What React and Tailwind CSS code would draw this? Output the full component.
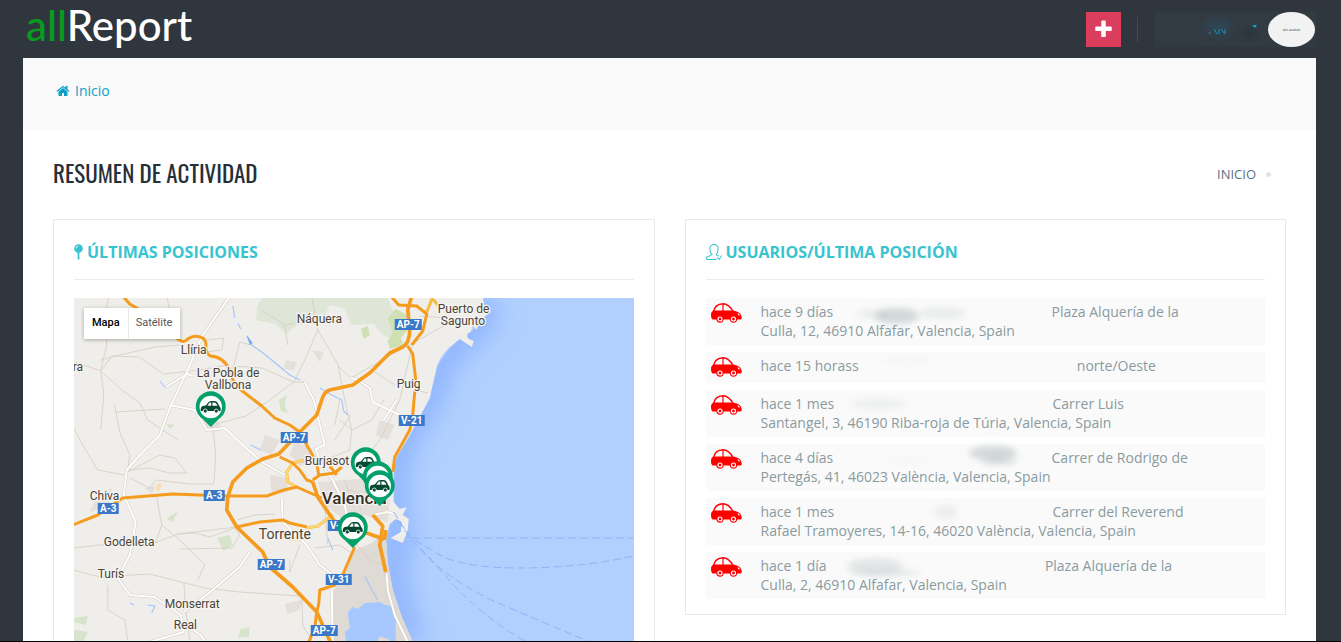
import React, { useState } from 'react'
import { SlUserFollowing } from 'react-icons/sl'

const positions = [
  {
    id: 1,
    when: 'hace 9 días',
    address: 'Plaza Alquería de la Culla, 12, 46910 Alfafar, Valencia, Spain',
    gap: 'w-[211px]',
    smudges: [[60, 18, 22, 8, 0.35], [35, 16, 16, 5, 0.12], [105, 15, 24, 6, 0.14]]
  },
  {
    id: 2,
    when: 'hace 15 horass',
    address: 'norte/Oeste',
    gap: 'w-[211px]',
    smudges: [[45, 8, 30, 4, 0.03]]
  },
  {
    id: 3,
    when: 'hace 1 mes',
    address: 'Carrer Luis Santangel, 3, 46190 Riba-roja de Túria, Valencia, Spain',
    gap: 'w-[211px]',
    smudges: [[40, 14, 28, 6, 0.1]]
  },
  {
    id: 4,
    when: 'hace 4 días',
    address: 'Carrer de Rodrigo de Pertegás, 41, 46023 València, Valencia, Spain',
    gap: 'w-[211px]',
    smudges: [[156, 9, 24, 7, 0.35], [162, 17, 18, 3, 0.35], [70, 17, 20, 2, 0.08]]
  },
  {
    id: 5,
    when: 'hace 1 mes',
    address: 'Carrer del Reverend Rafael Tramoyeres, 14-16, 46020 València, Valencia, Spain',
    gap: 'w-[211px]',
    smudges: [[108, 14, 12, 7, 0.12]]
  },
  {
    id: 6,
    when: 'hace 1 día',
    address: 'Plaza Alquería de la Culla, 2, 46910 Alfafar, Valencia, Spain',
    gap: 'w-[211px]',
    smudges: [[45, 14, 28, 8, 0.2], [55, 21, 36, 3, 0.22]]
  }
]

const pins = [
  [366, 463],
  [378, 477],
  [380, 486],
  [353, 528],
  [211, 407]
]

const towns = [
  { name: 'Náquera', x: 297, y: 323, size: 12 },
  { name: 'Puerto de', x: 438, y: 313, size: 12 },
  { name: 'Sagunto', x: 441, y: 325, size: 12 },
  { name: 'Llíria', x: 181, y: 354, size: 12 },
  { name: 'ra', x: 73, y: 371, size: 12 },
  { name: 'La Pobla de', x: 197, y: 377, size: 12 },
  { name: 'Vallbona', x: 205, y: 389, size: 12 },
  { name: 'Puig', x: 397, y: 388, size: 12 },
  { name: 'Burjasot', x: 305, y: 465, size: 12 },
  { name: 'Chiva', x: 90, y: 500, size: 12 },
  { name: 'Godelleta', x: 104, y: 546, size: 12 },
  { name: 'Turís', x: 98, y: 578, size: 12 },
  { name: 'Torrente', x: 259, y: 539, size: 14 },
  { name: 'Monserrat', x: 165, y: 608, size: 12 },
  { name: 'Real', x: 174, y: 629, size: 12 }
]

const shields = [
  { name: 'AP-7', x: 395, y: 319, w: 27 },
  { name: 'V-21', x: 399, y: 415, w: 26 },
  { name: 'AP-7', x: 281, y: 432, w: 27 },
  { name: 'A-3', x: 204, y: 490, w: 21 },
  { name: 'A-3', x: 98, y: 503, w: 21 },
  { name: 'V-30', x: 328, y: 520, w: 26 },
  { name: 'AP-7', x: 258, y: 559, w: 27 },
  { name: 'V-31', x: 326, y: 574, w: 26 },
  { name: 'AP-7', x: 311, y: 625, w: 27 }
]

const highways = [
  'M123 296 L130 304 L137 308 L160 322 L178 339 Q184 344 188 339 Q195 334 203 338 Q207 341 206 347 Q206 354 211 356 Q224 357 230 370 L234 382 L240 389 L262 406 L275 418 L290 425 L300 432',
  'M392 297 L399 305 L417 306 L427 314 L423 331 L412 345',
  'M408 346 L413 354 L416 380 L413 415 L410 430 L395 457 L393 472',
  'M303 438 L311 452 L317 463 L319 475',
  'M280 457 L293 463 L300 470 L307 480 L313 482',
  'M313 480 L320 475 L335 473 L342 467 M330 466 L337 475',
  'M73 525 L98 515 L108 508 L123 498 L173 494 L227 496 L267 496 L284 490 L297 487 L322 498',
  'M237 527 L260 522 L283 520 L290 523 L307 527',
  'M355 547 L342 577 L335 585 L320 590 L319 604 L317 612',
  'M317 612 L315 628 L309 642'
]

const thickHighways = [
  'M412 296 L408 310 L410 330 Q410 343 403 347 L390 353 L370 373 L353 385 L330 390 Q324 392 322 400 L317 415 L300 432 L279 454 L263 459 L247 468 L233 482 L228 497 L227 510 L237 527 L263 552 L270 567 L293 587 L317 612 L331 643',
  'M313 482 L318 497 L335 522 L367 533 L381 538',
  'M373 515 L383 526 L380 545 L386 572'
]

const whiteRoads = [
  'M230 297 L222 308 L203 335 L187 372 L170 408 L160 435 L140 455 L127 470 L124 495 L136 522 L130 555 L118 578 L130 595 L155 597 L181 615 L184 632 L150 642',
  'M193 376 L187 374 L165 388 M170 405 L195 410 L207 430 L225 428 L244 446 L262 462 L285 475',
  'M305 382 L314 400 L325 445 L316 449 L322 465 L333 480 L345 505 L350 530',
  'M351 378 L358 380 L370 388 L373 402 L400 415 M397 400 L384 420',
  'M184 612 L208 594 L240 567 L250 552 M184 625 L200 634 L206 642',
  'M282 498 L283 522 L307 545 L320 565 L333 575 M332 590 L333 642',
  'M387 574 L388 590 L395 615 L408 642',
  'M373 515 L388 512 L394 514'
]

const lanes = [
  'M109 297 L104 318 L107 345 L101 370 M101 360 L120 355 L155 347 L180 345',
  'M167 297 L171 315 M74 362 L90 367 L101 371 L122 390 L140 403 L148 420 L178 440',
  'M101 371 L104 395 L101 430 M101 371 L112 356 L139 357 L164 374 L200 370 L228 365',
  'M165 311 L158 320 M208 340 L224 338 L222 350 L206 352',
  'M230 384 L233 370 L240 342 L251 345 M232 366 L262 368 L294 382 L305 382',
  'M312 297 L318 330 L338 364 L345 400 L352 430 L350 450 L318 463',
  'M318 330 L305 360 L294 382 L270 400 L246 416 L216 424',
  'M338 366 L351 378 L400 350 M351 415 L335 440',
  'M60 400 L80 440 L98 470 L125 475 M115 405 L120 432 L130 455 L128 470 M115 412 L165 409',
  'M127 470 L150 468 L170 473 L187 473 L175 458 L160 455 L128 472',
  'M130 478 L150 488 L156 480 L190 484 L214 484 L216 455 L213 425',
  'M157 497 L162 525 L156 542 L134 542 M162 525 L180 540 L205 565 L198 580',
  'M74 548 L100 545 L155 543 L178 534 L237 527 M74 570 L100 577 L150 574 L205 588 L240 592 L300 596',
  'M178 534 L195 533 L210 537 L235 528 L240 535 L232 548 L180 549 M190 640 L186 610 L184 582',
  'M237 520 L255 515 L275 514 M290 560 L290 572 L300 545 M108 585 L108 610 L125 620 L128 640',
  'M302 596 L303 625 L312 640 M412 347 L400 400 L380 440 L368 455',
  'M340 420 L352 430 L372 420 L384 400 M372 370 L395 385 M400 350 L428 335 L445 325',
  'M414 390 L428 393 M353 540 L370 560 L384 566 M340 505 L362 502 M330 498 L350 490 L372 500',
  'M345 480 L350 495 L362 510 M325 505 L328 545 M315 548 L340 545 L350 552 M340 400 L335 425',
  'M420 316 L450 318 M262 310 L285 325 L300 322 M285 325 L288 345'
]

const urban = [
  'M295 440 L312 450 L315 460 L300 466 L290 455 Z',
  'M270 475 L287 478 L288 492 L272 494 Z',
  'M265 435 L280 440 L272 455 L260 450 Z',
  'M318 482 L372 478 L390 500 L388 522 L365 515 L345 520 L325 505 Z',
  'M380 420 L395 425 L388 440 L376 435 Z',
  'M98 495 L112 488 L110 505 L90 512 Z',
  'M145 488 L156 486 L152 494 Z',
  'M286 360 L297 362 L294 370 L284 369 Z',
  'M312 350 L324 352 L320 362 Z',
  'M200 420 L218 420 L222 430 L206 432 Z',
  'M285 604 L302 600 L300 610 L288 614 Z'
]

function Smudge({ spots }) {
  return (
    <svg className="absolute left-0 top-0 h-full w-full overflow-visible" aria-hidden="true">
      {spots.map(([cx, cy, rx, ry, opacity], i) => (
        <ellipse key={i} cx={cx} cy={cy - 5} rx={rx} ry={ry} fill="#8c9a9f" opacity={opacity} className="blur-[3px]" />
      ))}
    </svg>
  )
}

function RedCar() {
  return (
    <svg viewBox="0 0 31 20" className="mt-px h-5 w-[31px] shrink-0" aria-hidden="true">
      <path d="M2.500 9 Q4 1 12 0.800 Q18 1 22 8.500" fill="none" stroke="#f00" strokeWidth="1.400" />
      <path d="M12 1 V9" stroke="#f00" strokeWidth="1.200" />
      <path d="M2 7.500 H22 Q29 8.500 30 12 Q31.500 15 30 16.500 H1.500 Q0 15.500 0 12.500 Q0 9 2 7.500 Z" fill="#f00" />
      <path d="M26.500 10 Q28.800 10.500 28.800 12.800 Q26.500 12.500 26.500 10" fill="#fff" />
      <circle cx="9" cy="16" r="3.700" fill="#f00" />
      <circle cx="9" cy="16" r="2" fill="#f00" stroke="#fff" strokeWidth="1.200" />
      <circle cx="22.500" cy="16" r="3.700" fill="#f00" />
      <circle cx="22.500" cy="16" r="2" fill="#f00" stroke="#fff" strokeWidth="1.200" />
    </svg>
  )
}

function Pin({ x, y }) {
  return (
    <g transform={`translate(${x} ${y})`}>
      <path d="M0 20 L-8 12 A15 15 0 1 1 8 12 Z" fill="#04a06c" />
      <circle r="11.200" fill="#fff" />
      <path d="M-10 4 Q-10.500 0 -8 -1 L-5 -1.500 L-2 -5 Q-1 -6 1 -6 H4 Q6 -6 7 -4 L8.500 -1 Q10 0 10 3 L9.500 4 Z" fill="#04482f" />
      <path d="M-3.500 -1.300 L-1 -4.600 H0.500 V-1.300 Z M1.700 -4.600 H4 Q5.500 -4.500 6.800 -1.300 H1.700 Z" fill="#fff" />
      <circle cx="-5.500" cy="4" r="2" fill="#04482f" stroke="#fff" strokeWidth="0.800" />
      <circle cx="5.500" cy="4" r="2" fill="#04482f" stroke="#fff" strokeWidth="0.800" />
    </g>
  )
}

function PositionsMap() {
  return (
    <svg
      viewBox="74 298 560 400"
      preserveAspectRatio="xMidYMin slice"
      className="block h-[400px] w-full"
      role="img"
      aria-label="Mapa"
    >
      <defs>
        <filter id="soft" x="-50%" y="-20%" width="200%" height="140%">
          <feGaussianBlur stdDeviation="12" />
        </filter>
        <clipPath id="sea">
          <path d="M483 298 H640 V700 H375 V545 L385 538 L392 500 V470 L396 457 L412 427 L430 398 L434 380 L438 365 L450 348 L460 339 L480 325 Z" />
        </clipPath>
      </defs>
      <rect x="60" y="290" width="600" height="420" fill="#b1d0ff" />
      <g clipPath="url(#sea)">
        <path
          d="M485 298 L482 322 L462 340 L440 365 L430 398 L412 427 L396 457 L394 502 L400 545 L390 563 L402 617 L413 642"
          fill="none"
          stroke="#8db3fd"
          strokeWidth="26"
          filter="url(#soft)"
        />
      </g>
      <path
        d="M60 290 H482 L484 304 L488 314 L479 322 L477 330 L473 325 L471 332 Q465 334 469 339 L474 341 L472 347 L463 341 L460 339 L450 347 Q440 356 437 367 L434 380 L430 398 L420 417 L409 437 L397 457 L394 470 V502 L400 509 L407 507 L403 515 L409 519 L408 530 L403 543 L391 538 L401 532 L402 522 L396 519 L390 524 L386 540 L388 563 L393 590 L402 617 L414 644 L440 710 H60 Z"
        fill="#f0eeea"
      />
      <path d="M355 550 L372 543 L386 532 L388 563 L393 590 L402 617 L414 644 H333 L334 590 L342 580 Z" fill="#dfdad4" />
      <path d="M348 612 L353 607 L358 609 L365 603 L380 602 L385 605 L392 606 L396 617 V645 H347 L345 632 L350 628 Z" fill="#a6c8ff" />
      <path d="M376 645 L380 636 L390 640 V645 Z" fill="#dfdad4" />
      <path d="M262 298 H388 L392 308 L400 320 L396 334 L404 342 L384 336 L374 324 L352 325 L344 308 L330 305 L324 318 L296 326 L286 334 L276 324 L256 320 L258 306 Z" fill="#dfe6d7" />
      <path d="M361 329 L368 326 L370 335 L364 339 Z M388 318 L396 309 L406 314 L408 330 L401 338 L404 345 L390 349 L388 341 L393 332 Z" fill="#cfe0b2" />
      <path d="M279 400 L287 395 L285 405 L288 413 L281 411 Z M217 538 L230 535 L233 545 L224 551 Z M167 424 L175 425 L170 429 Z M167 519 L178 511 L173 522 Z M74 618 L88 616 L86 625 L74 622 Z M74 630 L88 632 L84 641 H74 Z M241 629 L250 627 L249 637 L238 638 Z" fill="#d5e4ca" />
      {urban.map((d) => (
        <path key={d} d={d} fill="#e4dfda" />
      ))}
      <path d="M158 483 L162 484 L160 491 L156 490 Z M288 537 L302 536 L300 541 L290 541 Z" fill="#fbdcae" />
      <g fill="none" stroke="#d6cfc5" strokeWidth="0.900" strokeLinejoin="round">
        {lanes.map((d) => (
          <path key={d} d={d} />
        ))}
      </g>
      <g fill="none" stroke="#d3cdc4" strokeWidth="3" strokeLinejoin="round">
        {whiteRoads.map((d) => (
          <path key={d} d={d} />
        ))}
      </g>
      <g fill="none" stroke="#fff" strokeWidth="2" strokeLinejoin="round">
        {whiteRoads.map((d) => (
          <path key={d} d={d} />
        ))}
      </g>
      <path
        d="M233 306 L235 318 M238 323 L241 329 M247 336 L252 345 L262 352 L272 360 L290 375 L300 380 M320 388 L332 395 L342 400 L344 411 L348 415 M130 603 L134 605 M148 605 L155 606 L152 613 M365 576 L371 588 L378 600 M160 381 L166 388 M251 445 L261 450 M328 538 L333 550"
        fill="none"
        stroke="#a3c4fb"
        strokeWidth="1.100"
      />
      <path d="M247 335 L253 343 L250 345 Z" fill="#77a9fb" />
      <g fill="none" stroke="#8fb3f5" strokeWidth="1" strokeDasharray="8 4">
        <path d="M412 538 H634" />
        <path d="M394 512 L410 537 L440 555 Q465 568 520 568 Q580 568 634 556" />
        <path d="M398 520 L412 540 L440 568 Q470 592 510 608 L590 642" />
        <path d="M412 540 L445 575 Q470 605 510 632 L530 644" />
      </g>
      <path
        d="M433 297 L427 312 M433 299 L439 306 M305 460 L293 463 L287 472 L288 482 L297 487 M307 528 L318 526 L333 515"
        fill="none"
        stroke="#f5bc43"
        strokeWidth="3"
      />
      <path
        d="M305 460 L293 463 L287 472 L288 482 L297 487 M307 528 L318 526 L333 515"
        fill="none"
        stroke="#fbdb7d"
        strokeWidth="1.800"
      />
      <g fill="none" stroke="#f59c1f" strokeWidth="3" strokeLinejoin="round">
        {highways.map((d) => (
          <path key={d} d={d} />
        ))}
      </g>
      <g fill="none" stroke="#f59c1f" strokeWidth="3.700" strokeLinejoin="round">
        {thickHighways.map((d) => (
          <path key={d} d={d} />
        ))}
        <path d="M380 540 L385 538 L386 530" />
      </g>
      {shields.map((s, i) => (
        <g key={i}>
          <rect x={s.x} y={s.y} width={s.w} height="11" fill="#3b78c9" />
          <text
            x={s.x + s.w / 2}
            y={s.y + 9}
            textAnchor="middle"
            className="fill-white font-['Roboto',sans-serif] text-[10px] font-bold"
          >
            {s.name}
          </text>
        </g>
      ))}
      <g
        className="font-['Roboto',sans-serif]"
        fill="#4a4337"
        stroke="#f6f4f1"
        strokeWidth="2.500"
        paintOrder="stroke"
      >
        {towns.map((t) => (
          <text key={t.name} x={t.x} y={t.y} fontSize={t.size}>
            {t.name}
          </text>
        ))}
        <text x="322" y="504" fontSize="17" fontWeight="500" fill="#332d24">
          Valencia
        </text>
      </g>
      {pins.map(([x, y]) => (
        <Pin key={`${x}-${y}`} x={x} y={y} />
      ))}
    </svg>
  )
}

function Panel({ icon, title, children }) {
  return (
    <section className="min-w-0 border border-[#e7eaed] bg-white px-5 pb-[15px] pt-5">
      <h2 className="mb-[18px] flex items-center gap-1 border-b border-[#ebeef0] pb-[15px] text-base leading-6 font-bold text-[#35c4d0]">
        {icon}
        {title}
      </h2>
      {children}
    </section>
  )
}

function App() {
  const [mapType, setMapType] = useState('Mapa')

  return (
    <div className="flex h-screen flex-col overflow-hidden border-b border-black bg-[#2f363e] pl-[23px] pr-[25px] font-['Open_Sans','Noto_Sans',sans-serif]">
      <header className="flex h-[58px] shrink-0 items-center justify-between">
        <a href="#inicio" className="pb-2 pl-[3px] font-['Lato',sans-serif] text-[42px] leading-none font-medium text-white">
          <span className="text-[#069c1e]">all</span>Report
        </a>
        <div className="flex items-center pt-px">
          <button type="button" aria-label="Nuevo" className="flex size-[35px] items-center justify-center bg-[#db3d5c] text-white">
            <svg viewBox="0 0 1792 1792" className="size-[21px]" fill="currentColor">
              <path d="M1600 736v192q0 40-28 68t-68 28h-416v416q0 40-28 68t-68 28h-192q-40 0-68-28t-28-68v-416h-416q-40 0-68-28t-28-68v-192q0-40 28-68t68-28h416v-416q0-40 28-68t68-28h192q40 0 68 28t28 68v416h416q40 0 68 28t28 68z" />
            </svg>
          </button>
          <span className="ml-4 h-[25px] w-px bg-[#3f4b56]" />
          <button type="button" aria-label="Usuario" className="ml-[17px] flex h-[35px] items-center bg-[#323a42]">
            <svg viewBox="0 0 113 35" className="h-[35px] w-[113px]" aria-hidden="true">
              <ellipse cx="63" cy="15" rx="14" ry="8" fill="#2a5970" opacity="0.400" className="blur-[4px]" />
              <path d="M54 22 l1 -2 M59 17 l3 5 M64 17 v5 M66 17 l4 5 M70 17 v5" stroke="#1b8fc4" strokeWidth="1" fill="none" />
              <path d="M97 13 h5 l-2 3 Z" fill="#0ea5d0" />
              <ellipse cx="94" cy="22" rx="7" ry="6" fill="#2a323a" opacity="0.600" className="blur-[2px]" />
            </svg>
            <span className="flex h-[35px] w-[47px] items-center justify-center rounded-[50%] bg-[#f2f2f2] text-[4px] text-[#333]">
              sin avatar
            </span>
            <span className="w-px" />
          </button>
        </div>
      </header>

      <main className="min-h-0 flex-1 overflow-hidden bg-white">
        <nav className="flex h-[72px] items-center bg-[#f9f9f9] pb-1.5 pl-[33px]">
          <a href="#inicio" className="flex items-center gap-[5px] text-sm text-[#0b9fca]">
            <svg viewBox="0 0 1792 1792" className="size-[14px]" fill="currentColor" aria-hidden="true">
              <path d="M1472 992v480q0 26-19 45t-45 19h-384v-384h-256v384h-384q-26 0-45-19t-19-45v-480q0-1 .5-3t.5-3l575-474 575 474q1 2 1 6zm223-69l-62 74q-8 9-21 11h-3q-13 0-21-7l-692-577-692 577q-12 8-24 7-13-2-21-11l-62-74q-8-10-7-23.500t11-21.500l719-599q32-26 76-26t76 26l244 204v-195q0-14 9-23t23-9h192q14 0 23 9t9 23v408l219 182q10 8 11 21.500t-7 23.500z" />
            </svg>
            Inicio
          </a>
        </nav>

        <div className="px-[30px]">
          <div className="flex h-[89px] items-center justify-between">
            <h1 className="pb-0.5 font-['Oswald','Open_Sans_Condensed','Roboto_Condensed','Liberation_Sans_Narrow',sans-serif] text-[23px] text-[#272f38]">
              RESUMEN DE ACTIVIDAD
            </h1>
            <div className="flex items-center gap-2.5 pr-[15px]">
              <a href="#inicio" className="text-[13px] text-[#5c7285]">INICIO</a>
              <span className="size-[5px] rounded-full bg-[#dfe4e9]" />
            </div>
          </div>

          <div className="grid grid-cols-2 items-start gap-[30px]">
            <Panel
              title="ÚLTIMAS POSICIONES"
              icon={
                <svg viewBox="0 0 9 16" className="h-4 w-[9px]" aria-hidden="true">
                  <circle cx="4.500" cy="4.500" r="4.300" fill="#35c4d0" />
                  <path d="M3.600 8 H5.400 V15.500 H3.600 Z" fill="#35c4d0" />
                  <path d="M2 4.500 Q2 2.200 4.300 2" fill="none" stroke="#fff" strokeWidth="0.800" />
                </svg>
              }
            >
              <div className="relative">
                <PositionsMap />
                <div className="absolute left-2.5 top-2.5 flex bg-white font-['Roboto',sans-serif] text-[11px] shadow-[0_1px_4px_rgba(0,0,0,0.3)]">
                  {['Mapa', 'Satélite'].map((type) => (
                    <button
                      key={type}
                      type="button"
                      onClick={() => setMapType(type)}
                      className={
                        mapType === type
                          ? 'h-[31px] px-2 font-medium text-black shadow-[1px_0_0_#e8e8e8]'
                          : 'h-[31px] px-2 text-[#565656]'
                      }
                    >
                      {type}
                    </button>
                  ))}
                </div>
              </div>
            </Panel>

            <Panel title="USUARIOS/ÚLTIMA POSICIÓN" icon={<SlUserFollowing className="size-4" />}>
              <ul className="flex flex-col gap-[7px]">
                {positions.map((item) => (
                  <li key={item.id} className="flex gap-[19px] bg-[#fafafa] pb-[5px] pl-[5px] pr-[75px] pt-1">
                    <RedCar />
                    <p className="min-h-[22px] text-sm leading-[19px] text-[#8a9a9f]">
                      {item.when}{' '}
                      <span className={`relative inline-block h-[14px] ${item.gap}`}>
                        <Smudge spots={item.smudges} />
                      </span>{' '}
                      {item.address}
                    </p>
                  </li>
                ))}
              </ul>
            </Panel>
          </div>
        </div>
      </main>
    </div>
  )
}

export default App
